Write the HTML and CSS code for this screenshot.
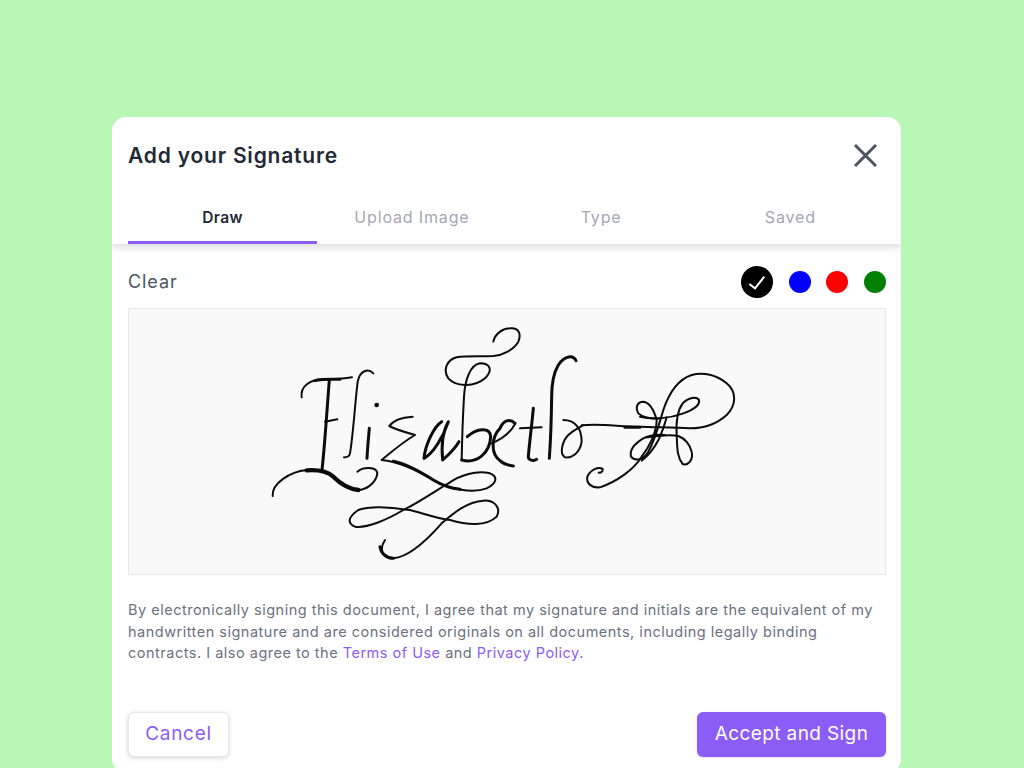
FILE: index.html
```html
<!DOCTYPE html>
<html lang="en">
<head>
<meta charset="utf-8">
<title>Add your Signature</title>
<link rel="stylesheet" href="styles.css">
</head>
<body>
<main class="modal">
  <header class="modal-head">
    <h1 class="title">Add your Signature</h1>
    <button class="close" aria-label="Close">
      <svg viewBox="0 0 24 24" width="24" height="24"><path d="M2 2 L23 23 M23 2 L2 23"/></svg>
    </button>
  </header>
  <nav class="tabs">
    <div class="tab active">Draw</div>
    <div class="tab">Upload Image</div>
    <div class="tab">Type</div>
    <div class="tab">Saved</div>
  </nav>
  <section class="body">
    <div class="toolbar">
      <span class="clear">Clear</span>
      <div class="swatches">
        <span class="swatch selected black">
          <svg viewBox="0 0 32 32" width="32" height="32"><path d="M8.3 18 L14 22.3 L23.3 10.7"/></svg>
        </span>
        <span class="swatch blue"></span>
        <span class="swatch red"></span>
        <span class="swatch green"></span>
      </div>
    </div>
    <div class="pad">
      <svg class="sig" viewBox="128 308 758 267" width="758" height="267" role="img" aria-label="Handwritten signature">
        <g transform="translate(260 320) scale(.33333)">
          <path d="M125 232 C120 200 150 178 190 178 C220 176 250 178 276 172"/>
          <path class="w2" d="M165 182 C190 176 220 178 240 178"/>
          <path class="w2" d="M208 180 C200 280 195 370 186 450"/>
          <path d="M195 305 L232 298"/>
          <path d="M340 160 C325 145 300 150 293 185 C285 250 280 340 270 400 C268 410 262 412 252 412"/>
          <circle cx="350" cy="255" r="7"/>
          <path class="w2" d="M328 325 C325 360 322 390 321 415"/>
          <path d="M458 290 C430 292 400 300 388 318 C410 330 440 338 465 345 C430 365 395 395 365 420 C420 425 470 450 520 480 C570 510 640 520 680 505 C710 490 715 470 690 460 C650 450 600 465 565 490 C530 510 480 545 430 570 C380 600 320 625 285 620 C260 610 265 590 295 570 C340 555 400 565 450 570 C490 580 530 595 570 600 C620 615 680 620 710 590 C725 560 700 540 670 542 C620 545 580 580 545 610 C510 650 450 710 400 715 C370 715 355 690 375 660"/>
          <path class="w2" d="M400 424 C440 432 480 455 520 480 C545 495 570 505 600 508"/>
          <path class="w2" d="M360 680 C362 700 380 715 400 715"/>
          <path d="M38 528 C35 490 90 455 140 450 C170 448 200 450 220 470 C250 495 270 510 300 510 C330 505 350 480 352 460 C350 440 310 440 292 455"/>
          <path class="w3" d="M140 451 C170 449 200 452 220 470 C240 490 265 506 295 510"/>
          <path class="w2" d="M545 305 C520 320 495 380 492 415 C520 400 550 350 565 305 C545 340 545 390 548 420 C565 405 585 385 597 365"/>
          <path d="M700 65 C705 40 730 25 750 25 C775 22 785 40 775 65 C760 90 730 105 700 108 C660 110 620 108 590 112 C560 120 548 150 565 175 C585 198 640 205 675 175 C700 150 690 130 660 130 C630 135 615 180 612 230 C608 300 606 370 605 420"/>
          <path class="w2" d="M605 420 C650 432 690 400 692 350 C690 320 650 325 622 350"/>
        </g>
        <g transform="translate(500 320) scale(.33333)">
          <path class="w2" d="M45 310 C30 295 10 300 0 325 C-25 350 -30 400 0 422 C10 432 25 436 40 438"/>
          <path d="M-25 370 C0 360 30 340 45 312"/>
          <path class="w2" d="M100 265 C95 320 88 370 85 410 C85 420 100 425 110 418"/>
          <path d="M60 325 L125 322"/>
          <path class="w2" d="M228 122 C220 105 195 105 175 135 C160 160 155 190 155 230 C154 300 152 360 148 415"/>
          <path d="M190 300 C225 300 245 325 245 365 C240 400 215 415 195 412 C175 400 190 360 205 345 C220 330 235 325 248 316"/>
          <path d="M245 316 C300 310 360 320 420 320 C480 322 530 322 570 325 C610 325 650 312 680 285 C710 255 710 215 680 190 C650 165 610 155 575 165 C530 180 505 225 490 270 C475 320 465 360 445 395 C430 420 405 425 393 410 C388 390 405 370 430 355 C450 345 470 342 495 345"/>
          <path class="w2" d="M375 322 L420 322"/>
          <path d="M480 295 C450 298 425 290 415 280 C405 262 412 245 430 245 C450 248 462 270 470 300 C470 340 445 385 425 410 C400 450 350 485 300 502 C275 505 258 490 262 470 C272 448 295 440 308 447 C310 455 300 460 296 458"/>
          <path d="M420 290 C460 300 510 295 550 280 C580 270 600 255 597 240 C590 228 565 232 548 250 C530 275 528 310 530 345 C532 380 530 410 548 432 C565 438 580 420 575 395 C570 375 555 355 535 348 C505 342 470 348 440 352"/>
          <path d="M500 292 C488 335 472 385 425 422"/>
        </g>
      </svg>
    </div>
    <p class="terms">By electronically signing this document, I agree that my signature and initials are the equivalent of my<br>handwritten signature and are considered originals on all documents, including legally binding<br>contracts. I also agree to the <a class="link" href="#">Terms of Use</a> and <a class="link" href="#">Privacy Policy</a>.</p>
    <div class="actions">
      <button class="btn cancel">Cancel</button>
      <button class="btn accept">Accept and Sign</button>
    </div>
  </section>
</main>
</body>
</html>
```
FILE: styles.css
```css
* { box-sizing: border-box; }
html, body { height: 100%; overflow: hidden; }
body {
  margin: 0;
  background: #b8f7b5;
  font-family: Inter, "Noto Sans", sans-serif;
}
.modal {
  width: 789px;
  margin: 117px 0 0 112px;
  background: #fff;
  border-radius: 14px;
}
.modal-head {
  display: flex;
  justify-content: space-between;
  align-items: center;
  padding: 20px 23px 16px 16px;
  height: 73px;
}
.title {
  margin: 0;
  font-size: 21px;
  font-weight: 600;
  letter-spacing: .8px;
  color: #1f2937;
}
.close {
  display: flex;
  width: 25px;
  height: 25px;
  padding: 0;
  border: 0;
  background: none;
}
.close path {
  fill: none;
  stroke: #4b5563;
  stroke-width: 3;
}
.tabs {
  display: grid;
  grid-template-columns: repeat(4, 1fr);
  padding: 0 16px;
  box-shadow: 0 4px 6px rgba(0, 0, 0, .12);
  clip-path: inset(0 0 -12px 0);
  position: relative;
}
.tab {
  display: flex;
  align-items: center;
  justify-content: center;
  height: 54px;
  padding-top: 3px;
  font-size: 16px;
  letter-spacing: .85px;
  color: #a3a8b4;
  border-bottom: 3px solid transparent;
}
.tab.active {
  font-weight: 600;
  font-size: 15.5px;
  letter-spacing: .4px;
  color: #1f2937;
  border-bottom-color: #8b5cf6;
}
.body { padding: 0 15px 16px 16px; }
.toolbar {
  display: flex;
  justify-content: space-between;
  align-items: center;
  padding-top: 22px;
  margin-bottom: 10px;
}
.clear {
  font-size: 18px;
  letter-spacing: .9px;
  color: #4b5563;
  position: relative;
  top: -1px;
}
.swatches {
  display: flex;
  align-items: center;
  gap: 15.7px;
}
.swatch {
  display: block;
  width: 22px;
  height: 22px;
  border-radius: 50%;
}
.swatch.selected { width: 32px; height: 32px; }
.swatch svg { display: block; }
.swatch path {
  fill: none;
  stroke: #fff;
  stroke-width: 2;
}
.black { background: #000; }
.blue { background: #00f; }
.red { background: #f00; }
.green { background: #008000; }
.pad {
  height: 267px;
  background: #f9f9f9;
  border: 1px solid #e5e7eb;
  overflow: hidden;
}
.sig {
  display: block;
  margin: -1px;
}
.sig path {
  fill: none;
  stroke: #0c0c0c;
  stroke-width: 6;
  stroke-linecap: round;
  stroke-linejoin: round;
}
.sig path.w2 { stroke-width: 9; }
.sig path.w3 { stroke-width: 13; }
.sig circle { fill: #0c0c0c; }
.terms {
  margin: 24px 0 48px;
  font-size: 14.5px;
  line-height: 21.5px;
  letter-spacing: .5px;
  color: #6b7280;
  white-space: nowrap;
}
.link {
  color: #8b5cf6;
  text-decoration: none;
}
.actions {
  display: flex;
  justify-content: space-between;
}
.btn {
  height: 45px;
  padding: 0 0 2px;
  border-radius: 6px;
  font-family: inherit;
  font-size: 19px;
  letter-spacing: .4px;
}
.cancel {
  width: 101px;
  background: #fff;
  color: #8b5cf6;
  border: 1px solid #e5e7eb;
  letter-spacing: .7px;
  box-shadow: 0 1px 4px rgba(0, 0, 0, .18);
}
.accept {
  width: 189px;
  background: #8b5cf6;
  color: #fff;
  border: 0;
  box-shadow: 0 1px 3px rgba(0, 0, 0, .12);
}
```
